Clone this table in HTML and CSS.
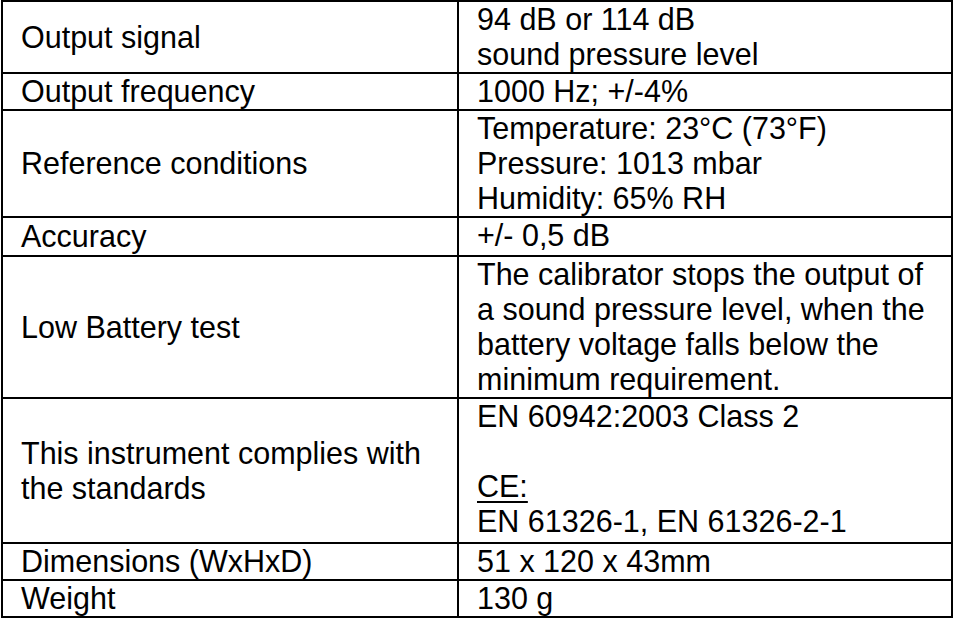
FILE: index.html
```html
<!DOCTYPE html>
<html lang="en">
<head>
<meta charset="utf-8">
<title>Specifications</title>
<link rel="stylesheet" href="styles.css">
</head>
<body>
<table class="spec">
  <tr>
    <td class="label">Output signal</td>
    <td class="value">94 dB or 114 dB<br>sound pressure level</td>
  </tr>
  <tr>
    <td class="label">Output frequency</td>
    <td class="value">1000 Hz; +/-4%</td>
  </tr>
  <tr>
    <td class="label">Reference conditions</td>
    <td class="value">Temperature: 23°C (73°F)<br>Pressure: 1013 mbar<br>Humidity: 65% RH</td>
  </tr>
  <tr class="row-acc">
    <td class="label">Accuracy</td>
    <td class="value">+/- 0,5 dB</td>
  </tr>
  <tr>
    <td class="label">Low Battery test</td>
    <td class="value">The calibrator stops the output of<br>a sound pressure level, when the<br>battery voltage falls below the<br>minimum requirement.</td>
  </tr>
  <tr class="row-std">
    <td class="label">This instrument complies with<br>the standards</td>
    <td class="value">EN 60942:2003 Class 2<br><br><span class="ul">CE:</span><br>EN 61326-1, EN 61326-2-1</td>
  </tr>
  <tr>
    <td class="label">Dimensions (WxHxD)</td>
    <td class="value">51 x 120 x 43mm</td>
  </tr>
  <tr class="row-last">
    <td class="label">Weight</td>
    <td class="value">130 g</td>
  </tr>
</table>
</body>
</html>
```

FILE: styles.css
```css
html, body {
  margin: 0;
  padding: 0;
  background: #fff;
}

.spec {
  margin: 0 0 0 1px;
  width: 952px;
  table-layout: fixed;
  border-collapse: separate;
  border-spacing: 0;
  border: 2px solid #000;
  font-family: "Liberation Sans", Arial, sans-serif;
  font-size: 30.5px;
  line-height: 35px;
  color: #000;
}

.spec td {
  box-sizing: border-box;
  padding: 0 18px;
  border-bottom: 2px solid #000;
  white-space: nowrap;
}

.spec .row-last td {
  border-bottom: none;
}

.label {
  width: 456px;
  border-right: 2px solid #000;
  vertical-align: middle;
}

.value {
  vertical-align: top;
}

.row-acc td {
  height: 39px;
}

.row-std td {
  height: 145px;
}

.ul {
  text-decoration: underline;
  text-decoration-thickness: 2px;
  text-underline-offset: 4px;
}
```
